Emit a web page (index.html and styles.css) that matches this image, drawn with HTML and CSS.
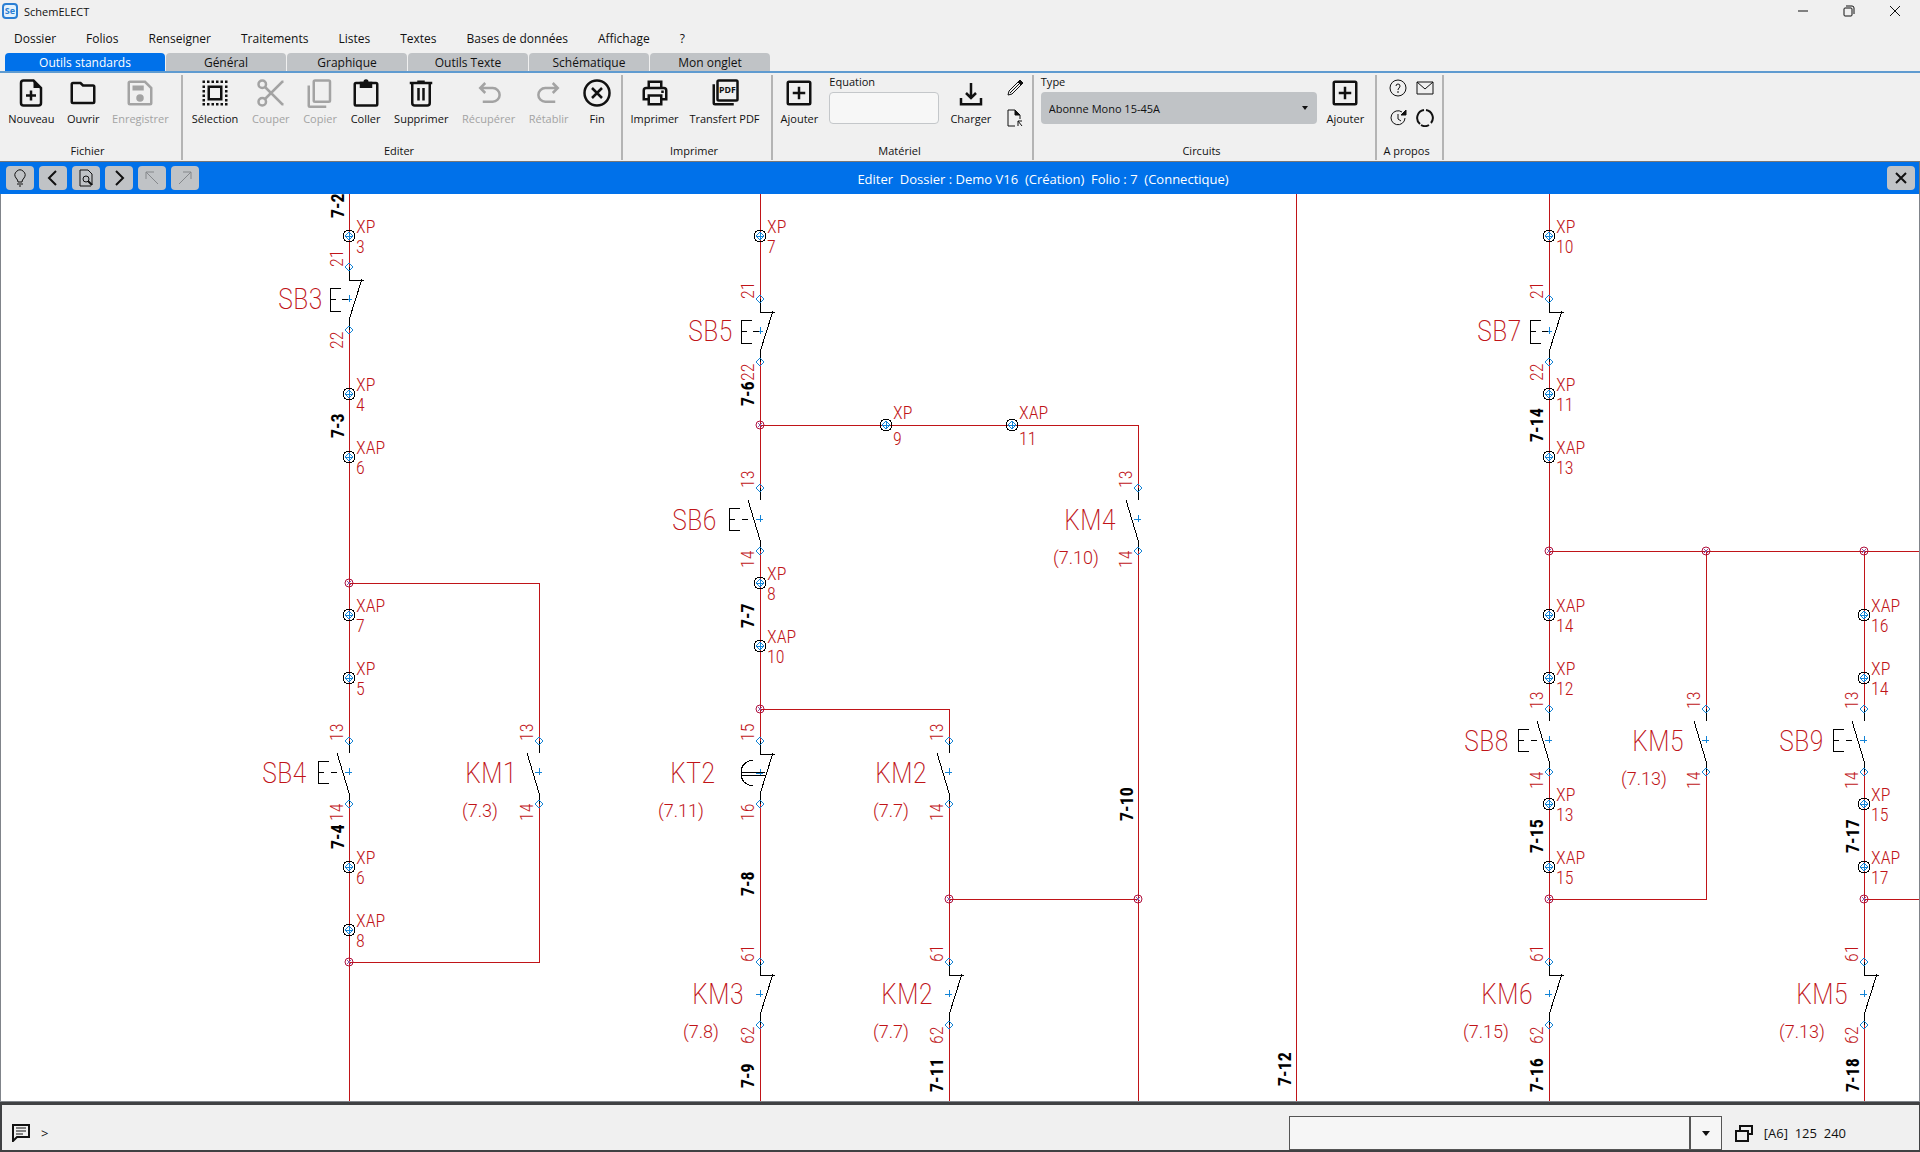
FILE: index.html
```html
<!DOCTYPE html>
<html lang="fr">
  <head>
    <meta charset="UTF-8" />
    <meta name="viewport" content="width=device-width, initial-scale=1.0" />
    <title>SchemELECT</title>
    <link rel="stylesheet" href="styles.css">
  </head>
  <body>
    <header class="titlebar">
      <svg class="logo" viewBox="0 0 16 16">
        <rect x="1" y="1" width="14" height="14" rx="3" fill="#e4f2fc" stroke="#2b7fd4" stroke-width="2" />
        <text x="8" y="11" text-anchor="middle">Se</text>
      </svg>
      <h1>SchemELECT</h1>
      <div class="window-buttons">
        <button aria-label="Réduire"><svg viewBox="0 0 12 12"><path d="M1 6h10" /></svg></button>
        <button aria-label="Restaurer"><svg viewBox="0 0 12 12"><rect x="1" y="3" width="8" height="8" rx="1" /><path d="M3 1h6q2 0 2 2v6" /></svg></button>
        <button aria-label="Fermer"><svg viewBox="0 0 12 12"><path d="M1 1l10 10M11 1L1 11" /></svg></button>
      </div>
    </header>

    <nav class="menubar">
      <a href="#">Dossier</a>
      <a href="#">Folios</a>
      <a href="#">Renseigner</a>
      <a href="#">Traitements</a>
      <a href="#">Listes</a>
      <a href="#">Textes</a>
      <a href="#">Bases de données</a>
      <a href="#">Affichage</a>
      <a href="#">?</a>
    </nav>

    <div class="tabs" role="tablist">
      <button class="tab active" role="tab" aria-selected="true">Outils standards</button>
      <button class="tab" role="tab">Général</button>
      <button class="tab" role="tab">Graphique</button>
      <button class="tab" role="tab">Outils Texte</button>
      <button class="tab" role="tab">Schématique</button>
      <button class="tab" role="tab">Mon onglet</button>
    </div>

    <div class="ribbon">
      <section class="group fichier">
        <div class="tools">
          <button class="tool">
            <svg class="icon" viewBox="0 0 24 24"><path d="M14 2H6Q4 2 4 4v16q0 2 2 2h12q2 0 2-2V8z" /><path class="solid" d="M14 2v6h6z" /><path d="M12 10v8M8 14h8" /></svg>
            Nouveau
          </button>
          <button class="tool">
            <svg class="icon" viewBox="0 0 24 24"><path d="M3 5v14q0 1 1 1h16q1 0 1-1V7q0-1-1-1h-8l-2-2H4Q3 4 3 5z" /></svg>
            Ouvrir
          </button>
          <button class="tool" disabled>
            <svg class="icon" viewBox="0 0 24 24"><path d="M4 3h12l5 5v12q0 1-1 1H4q-1 0-1-1V4q0-1 1-1z" /><path class="solid" d="M6 6h9v4H6z" /><circle class="solid" cx="12" cy="16" r="3" /></svg>
            Enregistrer
          </button>
        </div>
        <h2>Fichier</h2>
      </section>

      <section class="group editer">
        <div class="tools">
          <button class="tool">
            <svg class="icon" viewBox="0 0 24 24"><path d="M7 7h10v10H7z" /><path d="M2 3h20M2 21h20" stroke-dasharray="2 1.6" /><path d="M3 6v13M21 6v13" stroke-dasharray="2 1.6" /></svg>
            Sélection
          </button>
          <button class="tool" disabled>
            <svg class="icon" viewBox="0 0 24 24"><circle cx="5" cy="5" r="3" /><circle cx="5" cy="19" r="3" /><path d="M7 7l14 14h1M7 17L21 3h1" /></svg>
            Couper
          </button>
          <button class="tool" disabled>
            <svg class="icon" viewBox="0 0 24 24"><rect x="7" y="2" width="13" height="17" rx="1" /><path d="M3 6v16q0 1 1 1h13" /></svg>
            Copier
          </button>
          <button class="tool">
            <svg class="icon" viewBox="0 0 24 24"><rect x="3" y="4" width="18" height="18" rx="1" /><path class="solid" d="M7 3h3a2 2 0 0 1 4 0h3v5H7z" /></svg>
            Coller
          </button>
          <button class="tool">
            <svg class="icon" viewBox="0 0 24 24"><path d="M3 4h18M9 3h6M5 4v16q0 2 2 2h10q2 0 2-2V4M10 8v10M14 8v10" /></svg>
            Supprimer
          </button>
          <button class="tool" disabled>
            <svg class="icon" viewBox="0 0 24 24"><path d="M9 4L5 8l4 4M5 8h10a5 5 0 0 1 0 11H7" /></svg>
            Récupérer
          </button>
          <button class="tool" disabled>
            <svg class="icon" viewBox="0 0 24 24"><path d="M15 4l4 4-4 4M19 8H9a5 5 0 0 0 0 11h8" /></svg>
            Rétablir
          </button>
          <button class="tool">
            <svg class="icon" viewBox="0 0 24 24"><circle cx="12" cy="12" r="10" /><path d="M8 8l8 8M16 8l-8 8" /></svg>
            Fin
          </button>
        </div>
        <h2>Editer</h2>
      </section>

      <section class="group imprimer">
        <div class="tools">
          <button class="tool">
            <svg class="icon" viewBox="0 0 24 24"><path d="M7 8V3h10v5M7 17H3v-7q0-2 2-2h14q2 0 2 2v7h-4" /><path d="M7 14h10v7H7zM17 11h2" /></svg>
            Imprimer
          </button>
          <button class="tool">
            <svg class="icon" viewBox="0 0 24 24"><rect x="6" y="2" width="16" height="16" rx="1" /><path d="M3 5v15q0 1 1 1h15" /><text x="14" y="12" text-anchor="middle">PDF</text></svg>
            Transfert PDF
          </button>
        </div>
        <h2>Imprimer</h2>
      </section>

      <section class="group materiel">
        <div class="tools">
          <button class="tool">
            <svg class="icon" viewBox="0 0 24 24"><rect x="3" y="3" width="18" height="18" rx="1" /><path d="M12 7v10M7 12h10" /></svg>
            Ajouter
          </button>
          <div class="field equation">
            <label for="equation">Equation</label>
            <input type="text" id="equation" />
          </div>
          <button class="tool">
            <svg class="icon" viewBox="0 0 24 24"><path d="M12 4v12M8 12l4 4 4-4M4 16v5h16v-5" /></svg>
            Charger
          </button>
          <div class="minis">
            <button class="mini" aria-label="Modifier"><svg viewBox="0 0 18 18"><path d="M2 16l1-4L13 2l3 3L6 15zM4 14L13 5" /><path class="solid" d="M12 3l2-2 3 3-2 2z" /></svg></button>
            <button class="mini" aria-label="Fiche"><svg viewBox="0 0 18 18"><path d="M9 17H2V1h7l5 5v4" /><path class="solid" d="M9 1v5h5z" /><path d="M12 17v-5h4M12 12l4 5" /></svg></button>
          </div>
        </div>
        <h2>Matériel</h2>
      </section>

      <section class="group circuits">
        <div class="tools">
          <div class="field type">
            <label for="type">Type</label>
            <select id="type">
              <option>Abonne Mono 15-45A</option>
            </select>
          </div>
          <button class="tool">
            <svg class="icon" viewBox="0 0 24 24"><rect x="3" y="3" width="18" height="18" rx="1" /><path d="M12 7v10M7 12h10" /></svg>
            Ajouter
          </button>
        </div>
        <h2>Circuits</h2>
      </section>

      <section class="group apropos">
        <div class="tools">
          <div class="minis">
            <button class="mini" aria-label="Aide"><svg viewBox="0 0 18 18"><circle cx="9" cy="9" r="8" /><path d="M7 7q0-2 2-2t2 2q0 1-1 2t-1 2M9 12v2" /></svg></button>
            <button class="mini" aria-label="Mises à jour"><svg viewBox="0 0 18 18"><path d="M16 9A7 7 0 1 1 13 3M9 5v5l3 2" /><path class="solid" d="M12 6h5V1z" /></svg></button>
          </div>
          <div class="minis">
            <button class="mini" aria-label="Contact"><svg viewBox="0 0 18 18"><path d="M1 3h16v12H1zM1 3l8 7 8-7" /></svg></button>
            <button class="mini" aria-label="Actualiser"><svg viewBox="0 0 18 18"><path d="M4 15A8 8 0 0 1 8 1M10 1a8 8 0 0 1 5 13M13 16a8 8 0 0 1-8 0" stroke-width="2" /></svg></button>
          </div>
        </div>
        <h2>A propos</h2>
      </section>
    </div>

    <div class="folio-bar">
      <div class="folio-tools">
        <button aria-label="Astuce"><svg viewBox="0 0 20 20"><path d="M8 14q0-2-2-4a5 5 0 1 1 8 0q-2 2-2 4zM7 16h6M9 18h2" /></svg></button>
        <button aria-label="Folio précédent"><svg viewBox="0 0 20 20"><path class="bold" d="M13 3l-7 7 7 7" /></svg></button>
        <button aria-label="Aperçu"><svg viewBox="0 0 20 20"><path d="M16 17V6l-4-4H4v16h11" /><circle cx="10" cy="11" r="3" /><path class="bold" d="M12 13l4 4" /></svg></button>
        <button aria-label="Folio suivant"><svg viewBox="0 0 20 20"><path class="bold" d="M7 3l7 7-7 7" /></svg></button>
        <button aria-label="Renvoi précédent" disabled><svg viewBox="0 0 20 20"><path d="M16 16L4 4M4 11V4h8" /></svg></button>
        <button aria-label="Renvoi suivant" disabled><svg viewBox="0 0 20 20"><path d="M4 16L16 4M16 11V4H8" /></svg></button>
      </div>
      <p>Editer&nbsp; Dossier : Demo V16&nbsp; (Création)&nbsp; Folio : 7&nbsp; (Connectique)</p>
      <button class="close" aria-label="Fermer le folio"><svg viewBox="0 0 20 20"><path class="bold" d="M5 5l10 10M15 5L5 15" /></svg></button>
    </div>

    <main class="canvas">
      <svg class="schema">
        <defs>
          <g id="pin"><path class="blue" d="M0-4L4 0 0 4-4 0z" /></g>
          <g id="cross"><path class="blue" d="M-4 0h7M0-4v7" /></g>
          <g id="terminal">
            <circle class="black" r="6" />
            <use href="#pin" />
            <use href="#cross" />
          </g>
          <g id="node"><circle class="node" r="4" /><path class="violet" d="M-2-2l4 4M2-2l-4 4" /></g>
          <!-- normally open contact -->
          <g id="no">
            <path class="gap" d="M0 0v63" />
            <path class="black" d="M0 0v12M-12 12L0 52v11" />
            <use href="#cross" y="31" />
            <use href="#pin" />
            <use href="#pin" y="63" />
          </g>
          <!-- normally closed contact -->
          <g id="nc">
            <path class="gap" d="M0 0v63" />
            <path class="black" d="M0 0v13h15M13 12L0 53v10" />
            <use href="#cross" y="32" />
            <use href="#pin" />
            <use href="#pin" y="63" />
          </g>
          <g id="push-no"><path class="black" d="M-20 20h-11v22h11M-31 31h6M-18 31h6" /></g>
          <g id="push-nc"><path class="black" d="M-8 21h-11v23h11M-19 32h6M-7 32h6" /></g>
          <g id="timer"><path class="black" d="M-7 19Q-19 21-19 32T-7 45M-19 31h24M-19 34h24" /></g>
        </defs>

        <g transform="translate(-1 -194)">
          <!-- wires -->
          <path class="wire" d="M349 190v920M349 583h190v379H349" />
          <path class="wire" d="M760 190v920M760 425h378v685M760 709h189v401M949 899h189" />
          <path class="wire" d="M1296 190v920" />
          <path class="wire" d="M1549 190v920M1549 551h380M1706 551v348h-157M1864 551v559M1864 899h66" />

          <!-- column 1 -->
          <g transform="translate(349 236)"><use href="#terminal" /><text x="7" y="-3">XP</text><text x="7" y="17">3</text></g>
          <g transform="translate(349 267)"><use href="#nc" /><use href="#push-nc" /><text class="name" x="-71" y="42">SB3</text><text class="up" x="0" y="-6">21</text><text class="up" x="-82" y="-6">22</text></g>
          <g transform="translate(349 394)"><use href="#terminal" /><text x="7" y="-3">XP</text><text x="7" y="17">4</text></g>
          <g transform="translate(349 457)"><use href="#terminal" /><text x="7" y="-3">XAP</text><text x="7" y="17">6</text></g>
          <use href="#node" x="349" y="583" />
          <g transform="translate(349 615)"><use href="#terminal" /><text x="7" y="-3">XAP</text><text x="7" y="17">7</text></g>
          <g transform="translate(349 678)"><use href="#terminal" /><text x="7" y="-3">XP</text><text x="7" y="17">5</text></g>
          <g transform="translate(349 741)"><use href="#no" /><use href="#push-no" /><text class="name" x="-87" y="42">SB4</text><text class="up" x="0" y="-6">13</text><text class="up" x="-80" y="-6">14</text></g>
          <g transform="translate(539 741)"><use href="#no" /><text class="name" x="-74" y="42">KM1</text><text class="ref" x="-77" y="76">(7.3)</text><text class="up" x="0" y="-6">13</text><text class="up" x="-80" y="-6">14</text></g>
          <g transform="translate(349 867)"><use href="#terminal" /><text x="7" y="-3">XP</text><text x="7" y="17">6</text></g>
          <g transform="translate(349 930)"><use href="#terminal" /><text x="7" y="-3">XAP</text><text x="7" y="17">8</text></g>
          <use href="#node" x="349" y="962" />

          <!-- column 2 -->
          <g transform="translate(760 236)"><use href="#terminal" /><text x="7" y="-3">XP</text><text x="7" y="17">7</text></g>
          <g transform="translate(760 299)"><use href="#nc" /><use href="#push-nc" /><text class="name" x="-72" y="42">SB5</text><text class="up" x="0" y="-6">21</text><text class="up" x="-82" y="-6">22</text></g>
          <use href="#node" x="760" y="425" />
          <g transform="translate(886 425)"><use href="#terminal" /><text x="7" y="-6">XP</text><text x="7" y="20">9</text></g>
          <g transform="translate(1012 425)"><use href="#terminal" /><text x="7" y="-6">XAP</text><text x="7" y="20">11</text></g>
          <g transform="translate(760 488)"><use href="#no" /><use href="#push-no" /><text class="name" x="-88" y="42">SB6</text><text class="up" x="0" y="-6">13</text><text class="up" x="-80" y="-6">14</text></g>
          <g transform="translate(1138 488)"><use href="#no" /><text class="name" x="-74" y="42">KM4</text><text class="ref" x="-85" y="76">(7.10)</text><text class="up" x="0" y="-6">13</text><text class="up" x="-80" y="-6">14</text></g>
          <g transform="translate(760 583)"><use href="#terminal" /><text x="7" y="-3">XP</text><text x="7" y="17">8</text></g>
          <g transform="translate(760 646)"><use href="#terminal" /><text x="7" y="-3">XAP</text><text x="7" y="17">10</text></g>
          <use href="#node" x="760" y="709" />
          <g transform="translate(760 741)"><use href="#nc" /><use href="#timer" /><text class="name" x="-90" y="42">KT2</text><text class="ref" x="-102" y="76">(7.11)</text><text class="up" x="0" y="-6">15</text><text class="up" x="-80" y="-6">16</text></g>
          <g transform="translate(949 741)"><use href="#no" /><text class="name" x="-74" y="42">KM2</text><text class="ref" x="-76" y="76">(7.7)</text><text class="up" x="0" y="-6">13</text><text class="up" x="-80" y="-6">14</text></g>
          <use href="#node" x="949" y="899" />
          <use href="#node" x="1138" y="899" />
          <g transform="translate(760 962)"><use href="#nc" /><text class="name" x="-68" y="42">KM3</text><text class="ref" x="-77" y="76">(7.8)</text><text class="up" x="0" y="-6">61</text><text class="up" x="-82" y="-6">62</text></g>
          <g transform="translate(949 962)"><use href="#nc" /><text class="name" x="-68" y="42">KM2</text><text class="ref" x="-76" y="76">(7.7)</text><text class="up" x="0" y="-6">61</text><text class="up" x="-82" y="-6">62</text></g>

          <!-- column 3 -->
          <g transform="translate(1549 236)"><use href="#terminal" /><text x="7" y="-3">XP</text><text x="7" y="17">10</text></g>
          <g transform="translate(1549 299)"><use href="#nc" /><use href="#push-nc" /><text class="name" x="-72" y="42">SB7</text><text class="up" x="0" y="-6">21</text><text class="up" x="-82" y="-6">22</text></g>
          <g transform="translate(1549 394)"><use href="#terminal" /><text x="7" y="-3">XP</text><text x="7" y="17">11</text></g>
          <g transform="translate(1549 457)"><use href="#terminal" /><text x="7" y="-3">XAP</text><text x="7" y="17">13</text></g>
          <use href="#node" x="1549" y="551" />
          <use href="#node" x="1706" y="551" />
          <use href="#node" x="1864" y="551" />
          <g transform="translate(1549 615)"><use href="#terminal" /><text x="7" y="-3">XAP</text><text x="7" y="17">14</text></g>
          <g transform="translate(1549 678)"><use href="#terminal" /><text x="7" y="-3">XP</text><text x="7" y="17">12</text></g>
          <g transform="translate(1549 709)"><use href="#no" /><use href="#push-no" /><text class="name" x="-85" y="42">SB8</text><text class="up" x="0" y="-6">13</text><text class="up" x="-80" y="-6">14</text></g>
          <g transform="translate(1706 709)"><use href="#no" /><text class="name" x="-74" y="42">KM5</text><text class="ref" x="-85" y="76">(7.13)</text><text class="up" x="0" y="-6">13</text><text class="up" x="-80" y="-6">14</text></g>
          <g transform="translate(1549 804)"><use href="#terminal" /><text x="7" y="-3">XP</text><text x="7" y="17">13</text></g>
          <g transform="translate(1549 867)"><use href="#terminal" /><text x="7" y="-3">XAP</text><text x="7" y="17">15</text></g>
          <use href="#node" x="1549" y="899" />
          <g transform="translate(1549 962)"><use href="#nc" /><text class="name" x="-68" y="42">KM6</text><text class="ref" x="-86" y="76">(7.15)</text><text class="up" x="0" y="-6">61</text><text class="up" x="-82" y="-6">62</text></g>

          <!-- column 4 -->
          <g transform="translate(1864 615)"><use href="#terminal" /><text x="7" y="-3">XAP</text><text x="7" y="17">16</text></g>
          <g transform="translate(1864 678)"><use href="#terminal" /><text x="7" y="-3">XP</text><text x="7" y="17">14</text></g>
          <g transform="translate(1864 709)"><use href="#no" /><use href="#push-no" /><text class="name" x="-85" y="42">SB9</text><text class="up" x="0" y="-6">13</text><text class="up" x="-80" y="-6">14</text></g>
          <g transform="translate(1864 804)"><use href="#terminal" /><text x="7" y="-3">XP</text><text x="7" y="17">15</text></g>
          <g transform="translate(1864 867)"><use href="#terminal" /><text x="7" y="-3">XAP</text><text x="7" y="17">17</text></g>
          <use href="#node" x="1864" y="899" />
          <g transform="translate(1864 962)"><use href="#nc" /><text class="name" x="-68" y="42">KM5</text><text class="ref" x="-85" y="76">(7.13)</text><text class="up" x="0" y="-6">61</text><text class="up" x="-82" y="-6">62</text></g>

          <!-- wire numbers -->
          <text class="up num" x="-218" y="344">7-2</text>
          <text class="up num" x="-438" y="344">7-3</text>
          <text class="up num" x="-849" y="344">7-4</text>
          <text class="up num" x="-406" y="754">7-6</text>
          <text class="up num" x="-628" y="754">7-7</text>
          <text class="up num" x="-896" y="754">7-8</text>
          <text class="up num" x="-1088" y="754">7-9</text>
          <text class="up num" x="-1092" y="943">7-11</text>
          <text class="up num" x="-821" y="1133">7-10</text>
          <text class="up num" x="-1086" y="1291">7-12</text>
          <text class="up num" x="-442" y="1543">7-14</text>
          <text class="up num" x="-853" y="1543">7-15</text>
          <text class="up num" x="-1092" y="1543">7-16</text>
          <text class="up num" x="-853" y="1859">7-17</text>
          <text class="up num" x="-1092" y="1859">7-18</text>
        </g>
      </svg>
    </main>

    <footer class="statusbar">
      <svg class="status-icon" viewBox="0 0 18 18"><path d="M1 17V1h16v12H5z" /><path d="M4 4h10M4 7h10M4 10h7" /></svg>
      <span>&gt;</span>
      <div class="command">
        <input type="text" aria-label="Commande" />
        <button aria-label="Historique"><svg viewBox="0 0 8 5"><path d="M0 0h8L4 5z" /></svg></button>
      </div>
      <svg class="status-icon" viewBox="0 0 18 18"><path d="M5 6V2h12v8h-4M1 7h12v10H1z" /><path d="M5 2h12M1 7h12" stroke-width="2" /></svg>
      <span class="coords">[A6]&nbsp; 125&nbsp; 240</span>
    </footer>
  </body>
</html>
```
FILE: styles.css
```css
* {
  box-sizing: border-box;
}

body {
  font-family: "Open Sans", "Noto Sans", sans-serif;
  font-size: 13px;
  color: #111;
  background: #f0f0f0;
  display: flex;
  flex-direction: column;
  height: 100vh;
  margin: 0;
  overflow: hidden;
}

button {
  font: inherit;
  color: inherit;
  background: none;
  border: none;
  padding: 0;
}

svg {
  fill: none;
  stroke: currentColor;
  display: block;
}

.solid {
  fill: currentColor;
}

/* title bar */
.titlebar {
  display: flex;
  align-items: center;
  height: 22px;
  padding-left: 2px;
}

.logo {
  width: 16px;
  height: 16px;
}

.logo text {
  font-size: 9px;
  font-weight: bold;
  fill: #2b7fd4;
  stroke: none;
}

.titlebar h1 {
  font-size: 11px;
  font-weight: normal;
  margin: 0 0 0 6px;
}

.window-buttons {
  display: flex;
  margin-left: auto;
  padding-right: 2px;
}

.window-buttons button {
  width: 46px;
  height: 20px;
  display: grid;
  place-items: center;
}

.window-buttons svg {
  width: 12px;
  height: 12px;
}

/* menu */
.menubar {
  display: flex;
  gap: 30px;
  height: 31px;
  padding-left: 14px;
  font-size: 12px;
  line-height: 34px;
}

.menubar a {
  color: inherit;
  text-decoration: none;
}

/* tabs */
.tabs {
  display: flex;
  gap: 1px;
  height: 20px;
  padding-left: 5px;
  font-size: 12px;
  border-bottom: 2px solid #5f9bd0;
}

.tab {
  width: 120px;
  background: #c0c3c6;
  border-radius: 4px 4px 0 0;
  padding-top: 1px;
  line-height: 17px;
}

.tab.active {
  width: 160px;
  background: #0071ea;
  color: #fff;
}

/* ribbon */
.ribbon {
  display: flex;
  height: 88px;
  padding: 2px 0 1px;
  font-size: 11px;
}

.group {
  display: flex;
  flex-direction: column;
  justify-content: space-between;
  border-right: 2px solid #b4b4b4;
}

.group h2 {
  font-size: 11px;
  font-weight: normal;
  line-height: 14px;
  text-align: center;
  margin: 0 10px 2px 4px;
}

.fichier {
  width: 183px;
}

.editer {
  width: 440px;
}

.imprimer {
  width: 150px;
}

.materiel {
  width: 261px;
}

.circuits {
  width: 343px;
}

.apropos {
  width: 67px;
}

.tools {
  display: flex;
  justify-content: space-around;
  padding: 0 6px 0 2px;
}

.editer .tools,
.materiel .tools {
  padding: 0 2px;
}

.materiel .minis {
  margin-left: 4px;
}

.apropos .tools {
  padding: 0 4px 0 8px;
}

.tool {
  display: flex;
  flex-direction: column;
  align-items: center;
  gap: 4px;
  padding-top: 3px;
  line-height: 14px;
}

.tool:disabled {
  color: #a3a3a3;
}

.icon {
  width: 30px;
  height: 30px;
  stroke-width: 2;
}

.icon .solid {
  stroke: none;
}

.icon text {
  font-size: 7px;
  font-weight: bold;
  fill: currentColor;
  stroke: none;
}

.field {
  display: flex;
  flex-direction: column;
}

.field label {
  line-height: 13px;
}

.field input,
.field select {
  width: 100%;
  height: 32px;
  font: inherit;
  color: inherit;
  border-radius: 4px;
  margin-top: 4px;
}

.field input {
  background: #f7f7f7;
  border: 1px solid #c4c7ca;
}

.field select {
  appearance: none;
  background: #c0c3c6;
  border: none;
  padding: 0 8px;
}

.equation {
  width: 110px;
}

.type {
  width: 276px;
  position: relative;
}

.type::after {
  content: "";
  position: absolute;
  right: 9px;
  top: 31px;
  border: 3px solid transparent;
  border-top: 4px solid #111;
  border-bottom: none;
}

.minis {
  display: flex;
  flex-direction: column;
  gap: 12px;
  padding-top: 4px;
}

.mini svg {
  width: 18px;
  height: 18px;
}

/* folio bar */
.folio-bar {
  display: flex;
  align-items: center;
  height: 33px;
  padding: 0 4px 0 6px;
  background: #0071ea;
  border-top: 1px solid #777;
  border-right: 1px solid #777;
  color: #fff;
}

.folio-bar p {
  flex: 1;
  text-align: center;
  margin: 2px 0 0;
}

.folio-tools {
  display: flex;
  gap: 5px;
}

.folio-bar button {
  width: 28px;
  height: 24px;
  display: grid;
  place-items: center;
  background: #c0c3c6;
  border-radius: 4px;
  color: #111;
}

.folio-bar button:disabled {
  color: #85888b;
}

.folio-bar svg {
  width: 20px;
  height: 20px;
}

.folio-bar .bold {
  stroke-width: 2;
}

/* drawing */
.canvas {
  flex: 1;
  min-height: 0;
  background: #fff;
  border: 1px solid #80848a;
  border-top: none;
}

.schema {
  width: 100%;
  height: 100%;
  overflow: hidden;
  shape-rendering: crispEdges;
}

.schema text {
  font-family: "Roboto Condensed", Roboto, sans-serif;
  font-size: 18px;
  font-weight: 300;
  fill: #c01418;
  stroke: none;
}

.schema .name {
  font-size: 29px;
  font-weight: 200;
}

.schema .ref {
  font-family: Roboto, sans-serif;
}

.schema .up {
  transform: rotate(-90deg);
}

.schema .num {
  font-weight: 700;
  fill: #000;
}

.wire {
  stroke: #c01418;
}

.black {
  stroke: #000;
}

.blue {
  stroke: #1484d6;
}

.node {
  stroke: #b0103c;
  shape-rendering: auto;
}

.violet {
  stroke: #8a5aa8;
}

.gap {
  stroke: #fff;
}

/* status bar */
.statusbar {
  display: flex;
  align-items: center;
  height: 50px;
  padding: 11px 73px 0 10px;
  border: 2px solid #404143;
  border-top-width: 3px;
  border-right-width: 1px;
}

.status-icon {
  width: 18px;
  height: 18px;
  stroke-width: 2;
}

.status-icon path + path {
  stroke-width: 1;
}

.statusbar span {
  margin-left: 11px;
}

.command {
  display: flex;
  width: 433px;
  height: 34px;
  margin: 0 13px 0 auto;
  border: 1px solid #555;
}

.command input {
  flex: 1;
  min-width: 0;
  background: #f6f6f6;
  border: none;
}

.command button {
  width: 32px;
  display: grid;
  place-items: center;
  background: #f6f6f6;
  border-left: 2px solid #555;
}

.command svg {
  width: 8px;
  height: 5px;
  fill: #111;
  stroke: none;
}
```
